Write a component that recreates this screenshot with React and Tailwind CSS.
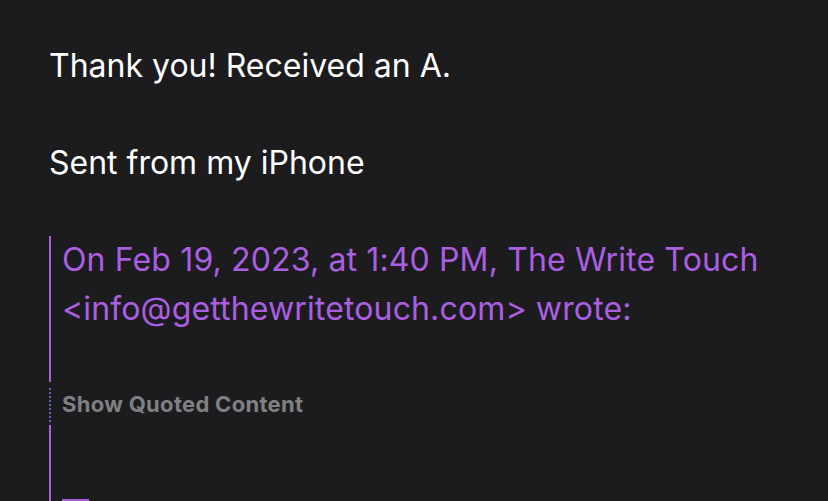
export default function App() {
  return (
    <div className="min-h-[501px] w-full overflow-hidden bg-[#1c1c1e] pl-[49px] pt-[42px] font-['Inter',sans-serif] text-[32px] leading-[48.5px] text-white">
      <p>Thank you! Received an A.</p>
      <p>&nbsp;</p>
      <p>Sent from my iPhone</p>
      <p>&nbsp;</p>
      <div className="border-l-2 border-[#ab5fe0] pl-[11px] tracking-[0.14px] text-[#ab5fe0]">
        <p>
          On Feb 19, 2023, at 1:40 PM, The Write Touch
          <br />
          &lt;info@getthewritetouch.com&gt; wrote:
        </p>
        <p>&nbsp;</p>
      </div>
      <div className="mt-[6px] flex h-[37px] items-start">
        <div className="h-[34px] border-l-2 border-dotted border-[#5d63c9]" />
        <span className="pl-[11px] pt-[3px] text-[22px] leading-[26px] font-bold tracking-[0.3px] text-[#808084]">
          Show Quoted Content
        </span>
      </div>
      <div className="flex h-[80px] border-l-2 border-[#ab5fe0] pl-[11px]">
        <div className="mt-[74px] h-[3px] w-[27px] bg-[#ab5fe0]" />
      </div>
    </div>
  );
}
